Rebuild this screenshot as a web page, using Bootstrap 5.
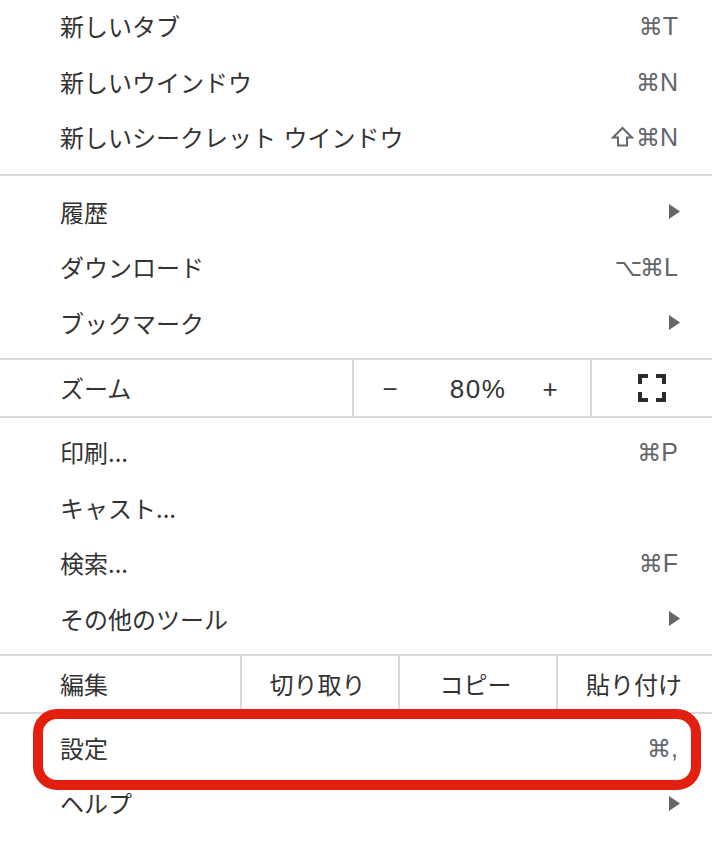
<!DOCTYPE html>
<html lang="ja">
<head>
<meta charset="utf-8">
<title>メニュー</title>
<link href="https://cdn.jsdelivr.net/npm/bootstrap@5.3.0/dist/css/bootstrap.min.css" rel="stylesheet">
<style>
html,body{height:842px;overflow:hidden;background:#fff}
body{font-family:"Noto Sans CJK JP","Liberation Sans",sans-serif;font-size:24px;color:#333;line-height:1.2}
.menu-wrap{position:relative;width:712px;height:842px;overflow:hidden}
.menu-group{border-bottom:2px solid #d9d9d9}
.g1{margin-top:-1px;padding-bottom:8.5px}
.g2{padding-top:8.5px;padding-bottom:7px}
.g3{padding-top:7px;padding-bottom:7px}
.g4{padding-top:6.5px}
.menu-row{height:55.5px;padding:0 32px 0 60px}
.wide-space{word-spacing:2px}
.keys{font-family:"Liberation Sans","DejaVu Sans",sans-serif;color:#63666a;font-size:25px;margin-right:2px}
.keys .sym{font-family:"DejaVu Sans",sans-serif;font-size:24px}
.keys .opt{letter-spacing:-2px}
.shift-ic{width:23px;height:21px;margin-right:2px;vertical-align:-1px;fill:none;stroke:#63666a;stroke-width:2}
.arrow{width:11px;height:15px;margin-top:-1px;fill:#666}
.tool-row{height:56px;border-bottom:2px solid #d9d9d9;box-sizing:content-box}
.tool-label{padding-left:60px}
.zoom-label{width:352px}
.cell{border-left:2px solid #d9d9d9}
.zoom-ctl{width:238px;padding:3px 30px 0 26px;font-family:"Liberation Sans",sans-serif;font-size:26px}
.zoom-btn{width:20px;text-align:center}
.zoom-val{letter-spacing:1.5px;margin-left:16px}
.full-cell{flex:1}
.full-ic{width:30px;height:30px;fill:#2b2b2b}
.edit-label{width:240px}
.edit-cell{width:158px;padding-right:5px}
.edit-cell.last{flex:1;width:auto;padding-right:2px}
.ring{position:absolute;left:33px;top:709px;width:668px;height:81px;border:10px solid #e3200f;border-radius:24px;pointer-events:none}
</style>
</head>
<body>
<div class="menu-wrap">
  <div class="menu-group g1">
    <div class="menu-row d-flex align-items-center justify-content-between"><span>新しいタブ</span><span class="keys"><span class="sym">⌘</span>T</span></div>
    <div class="menu-row d-flex align-items-center justify-content-between"><span>新しいウインドウ</span><span class="keys"><span class="sym">⌘</span>N</span></div>
    <div class="menu-row d-flex align-items-center justify-content-between"><span class="wide-space">新しいシークレット ウインドウ</span><span class="keys"><svg class="shift-ic" viewBox="0 0 23 21"><path d="M11.5 2L21 11.5H16V19.5H7V11.5H2Z"/></svg><span class="sym">⌘</span>N</span></div>
  </div>
  <div class="menu-group g2">
    <div class="menu-row d-flex align-items-center justify-content-between"><span>履歴</span><svg class="arrow" viewBox="0 0 11 15"><path d="M0 0L11 7.5L0 15Z"/></svg></div>
    <div class="menu-row d-flex align-items-center justify-content-between"><span>ダウンロード</span><span class="keys"><span class="sym"><span class="opt">⌥</span>⌘</span>L</span></div>
    <div class="menu-row d-flex align-items-center justify-content-between"><span>ブックマーク</span><svg class="arrow" viewBox="0 0 11 15"><path d="M0 0L11 7.5L0 15Z"/></svg></div>
  </div>
  <div class="tool-row d-flex">
    <div class="tool-label zoom-label d-flex align-items-center">ズーム</div>
    <div class="cell zoom-ctl d-flex align-items-center justify-content-between"><span class="zoom-btn">−</span><span class="zoom-val">80%</span><span class="zoom-btn">+</span></div>
    <div class="cell full-cell d-flex align-items-center justify-content-center"><svg class="full-ic" viewBox="0 0 30 30"><path d="M1 1h10v4H5v6H1zM19 1h10v10h-4V5h-6zM1 19h4v6h6v4H1zM25 19h4v10H19v-4h6z"/></svg></div>
  </div>
  <div class="menu-group g3">
    <div class="menu-row d-flex align-items-center justify-content-between"><span>印刷...</span><span class="keys"><span class="sym">⌘</span>P</span></div>
    <div class="menu-row d-flex align-items-center justify-content-between"><span>キャスト...</span></div>
    <div class="menu-row d-flex align-items-center justify-content-between"><span>検索...</span><span class="keys"><span class="sym">⌘</span>F</span></div>
    <div class="menu-row d-flex align-items-center justify-content-between"><span>その他のツール</span><svg class="arrow" viewBox="0 0 11 15"><path d="M0 0L11 7.5L0 15Z"/></svg></div>
  </div>
  <div class="tool-row d-flex">
    <div class="tool-label edit-label d-flex align-items-center">編集</div>
    <div class="cell edit-cell d-flex align-items-center justify-content-center">切り取り</div>
    <div class="cell edit-cell d-flex align-items-center justify-content-center">コピー</div>
    <div class="cell edit-cell last d-flex align-items-center justify-content-center">貼り付け</div>
  </div>
  <div class="g4">
    <div class="menu-row d-flex align-items-center justify-content-between"><span>設定</span><span class="keys"><span class="sym">⌘</span>,</span></div>
    <div class="menu-row d-flex align-items-center justify-content-between"><span>ヘルプ</span><svg class="arrow" viewBox="0 0 11 15"><path d="M0 0L11 7.5L0 15Z"/></svg></div>
  </div>
  <div class="ring"></div>
</div>
<script src="https://cdn.jsdelivr.net/npm/bootstrap@5.3.0/dist/js/bootstrap.bundle.min.js"></script>
</body>
</html>
